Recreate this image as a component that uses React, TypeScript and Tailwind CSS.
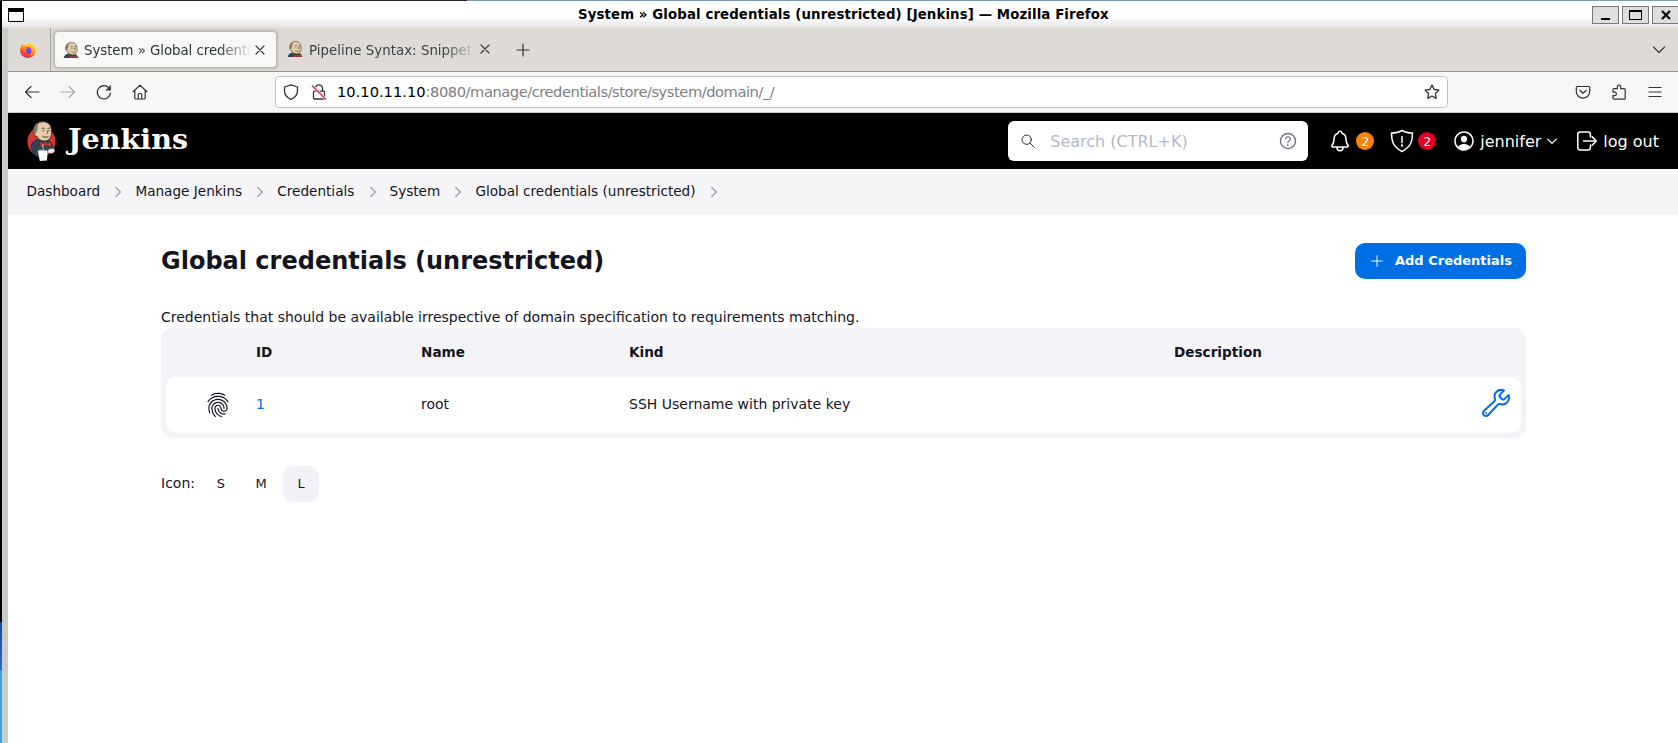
import type { ReactNode } from "react";
import {
  IoBuildOutline,
  IoFingerPrintOutline,
  IoNotificationsOutline,
  IoPersonCircleOutline,
  IoHelpCircleOutline,
} from "react-icons/io5";

function Butler({ className, disc = false }: { className: string; disc?: boolean }) {
  return (
    <svg className={className} viewBox={disc ? "0 0 28 40" : "3.500 0 22 25"} fill="none">
      {disc && <ellipse cx="14" cy="20.500" rx="14" ry="15" fill="#d33833" />}
      <path d="M4.500 22c2-2.500 5-3.500 7.500-3.500l8.500.5c3 1 4.500 3 5 6.500l-1 5-5 1-1 5.500-6 .5-3.500-2.500C5 33 2 26 4.500 22z" fill="#2b4658" stroke="#1b2833" strokeWidth=".6" />
      <path d="M6.800 12.500C5 7 7.500 1.300 14.500.8c5-.4 8.500 2 9.300 6.700.5 3 .4 6.500-.6 8.500-1.400 2.800-3.600 4.300-6.700 4.100-3-.1-6-2-6.800-4.500-1.600-.1-2.900-1.600-2.900-3.100z" fill="#e6cba9" stroke="#2b2520" strokeWidth=".8" />
      <path d="M6.800 12.500C5.200 8 6.700 2.800 12.500 1.200 9.800 4 10 7 9.900 9.300c-.9.500-1.200 1.700-1.300 3.200z" fill="#7d756c" />
      <path d="M14 7.800c1.200-1 2.800-.8 3.400.1M20 7.600c.9-.7 2.200-.6 2.700.1M15.200 9.800h1.500M20.700 9.600h1.300M19.300 9.500c.8 1.200 1.500 2.200.2 3.200M15 15.200c2 1.400 4.500 1.200 6 .2" stroke="#493c32" strokeWidth="1" />
      <path d="m12.500 21 4 1.700 1-1.700 1.500.3.200 1.700 4-2.300.5 5-4.200-1.400-2.700.5-3.800 1.500z" fill="#d33833" stroke="#81201e" strokeWidth=".4" />
      {disc && (
        <>
          <path d="M10.300 29.500h10.200l-1.200 10-7 .5z" fill="#fff" />
          <path d="M20 29.500c2-2 5-3 7-1.200 1 2-.5 4-3 4.200l-3.500-.2z" fill="#ede7df" stroke="#332d28" strokeWidth=".5" />
          <path d="m15 23.500 1 6-4-.5" stroke="#f0f0f0" strokeWidth=".7" />
        </>
      )}
    </svg>
  );
}

function FirefoxMark() {
  return (
    <svg className="mr-px size-4" viewBox="0 0 16 16">
      <defs>
        <linearGradient id="ffOuter" x1=".8" y1="0" x2=".3" y2="1">
          <stop offset="0" stopColor="#fff44f" />
          <stop offset=".4" stopColor="#ffa80e" />
          <stop offset=".75" stopColor="#ff4a3c" />
          <stop offset="1" stopColor="#e31587" />
        </linearGradient>
        <linearGradient id="ffGlobe" x1=".7" y1="0" x2=".3" y2="1">
          <stop offset="0" stopColor="#9059ff" />
          <stop offset="1" stopColor="#4a2fc4" />
        </linearGradient>
      </defs>
      <path d="M10 0c1 2 3 2.300 4.300 4.500C15.600 6 16 8 15.400 10.500 14.500 13.700 11.500 16 8 16c-4.500 0-8-3.400-8-7.700C0 6 .8 4.500 1.800 3.300L2.200 2l1.700 1.500C5 3.200 6 3.300 7 3.800 7.300 2 8.600.8 10 0z" fill="url(#ffOuter)" />
      <circle cx="8" cy="8.400" r="3.400" fill="url(#ffGlobe)" />
      <path d="M3.500 5.500c1.500-.6 3 .1 4.200.6C6.500 6.500 6.400 7.600 5.500 8c.2 1.400 1.500 2 3 1.500-1 1.700-4 1.500-5-1z" fill="#ff8a16" />
    </svg>
  );
}

function Stroke({ children, className, w = 1.2 }: { children: ReactNode; className: string; w?: number }) {
  return (
    <svg className={className} viewBox="0 0 16 16" fill="none" stroke="currentColor" strokeWidth={w} strokeLinecap="round" strokeLinejoin="round">
      {children}
    </svg>
  );
}

function WindowButton({ children }: { children: ReactNode }) {
  return (
    <div className="flex h-[18px] w-[27px] shrink-0 items-center justify-center border border-[#777] bg-[#dedede]">
      {children}
    </div>
  );
}

function CloseX() {
  return (
    <Stroke className="size-4 shrink-0 text-[#3a3d40]">
      <path d="m4 4 8 8M12 4l-8 8" />
    </Stroke>
  );
}

function TitleBar() {
  return (
    <div className="flex h-[27px] shrink-0 items-start bg-linear-to-b from-white from-60% to-[#e2e2e2] pl-[6px]">
      <div className="mt-[7px] h-[14px] w-4 border border-t-4 border-black bg-white" />
      <div className="flex-1 pt-[5px] pl-[554px] text-[13.33px] leading-[18px] font-bold tracking-[0.1px] whitespace-pre text-black">
        System » Global credentials (unrestricted) [Jenkins] — Mozilla Firefox
      </div>
      <div className="-mr-px flex gap-[3px] pt-[5px]">
        <WindowButton>
          <div className="mt-[7px] h-[2px] w-[9px] bg-black" />
        </WindowButton>
        <WindowButton>
          <div className="h-[10px] w-[13px] border border-t-2 border-black" />
        </WindowButton>
        <WindowButton>
          <svg className="size-[10px]" viewBox="0 0 10 10" stroke="#000" strokeWidth="2.300">
            <path d="m1 1 8 8M9 1 1 9" />
          </svg>
        </WindowButton>
      </div>
    </div>
  );
}

function TabStrip() {
  return (
    <div className="flex h-[44px] shrink-0 items-center border-b border-[#96948a] bg-[#dedbd7]">
      <div className="flex h-full w-[43px] items-center justify-center border-r border-[#a8a6a0] pr-px">
        <FirefoxMark />
      </div>
      <div className="ml-[3px] flex h-[37px] w-[223px] items-center rounded-[4px] border border-[#bdbab6] bg-[#f8f8f7] pl-[8px] shadow-[0_0_3px_rgba(0,0,0,0.3)]">
        <Butler className="h-4 w-4" />
        <div className="mt-[2px] ml-[5px] w-[168px] mask-r-from-80% text-[13.33px] tracking-[-0.04px] whitespace-nowrap text-[#2e3436]">
          System » Global credenti
        </div>
        <CloseX />
      </div>
      <div className="flex w-[220px] items-center pl-[10px]">
        <Butler className="h-4 w-4" />
        <div className="mt-[2px] ml-[6px] w-[168px] mask-r-from-80% text-[13.33px] tracking-[0.04px] whitespace-nowrap text-[#3c4143]">
          Pipeline Syntax: Snippet
        </div>
        <CloseX />
      </div>
      <Stroke className="ml-[18px] size-4 text-[#2e3436]">
        <path d="M8 2v12M2 8h12" />
      </Stroke>
      <div className="flex-1" />
      <Stroke className="mr-[11px] size-4 text-[#3a3d40]">
        <path d="m2.500 5 5.500 5.500L13.500 5" />
      </Stroke>
    </div>
  );
}

function Toolbar() {
  return (
    <div className="flex h-[41px] shrink-0 items-center border-b border-[#c9c6bf] bg-[#f7f7f5] text-[#2e3436]">
      <div className="flex gap-5 pl-4">
        <Stroke className="size-4"><path d="M15 8H1.500M7 2.500 1.500 8 7 13.500" /></Stroke>
        <Stroke className="size-4 text-[#a9abac]"><path d="M1 8h13.500M9 2.500 14.500 8 9 13.500" /></Stroke>
        <Stroke className="size-4" w={1.3}>
          <path d="M14.500 9.200A6.600 6.600 0 1 1 12.600 3.600" />
          <path d="M14.700 1.500v4.800H10z" fill="currentColor" strokeWidth=".4" />
        </Stroke>
        <Stroke className="size-4">
          <path d="M1 7.800 8 1.200l7 6.600M2.800 6.500v7.200q0 1.300 1.300 1.300h7.800q1.300 0 1.300-1.300V6.500M6.300 14.800v-4.300q0-1 1-1h1.400q1 0 1 1v4.300" />
        </Stroke>
      </div>
      <div className="ml-[127px] flex h-[32px] w-[1173px] items-center rounded-[4px] border border-[#c3c0bb] bg-white pl-[7px]">
        <Stroke className="size-4" w={1.3}>
          <path d="M8 .8 14.500 3v4c0 4-2.500 6.600-6.500 8.400C4 13.600 1.500 11 1.500 7V3z" />
        </Stroke>
        <svg className="ml-[12px] size-4" viewBox="0 0 16 16" fill="none" stroke="#2e3436" strokeWidth="1.300">
          <path d="M4.500 7V4.300a3.500 3.500 0 0 1 7 0V7M3.500 7.200h9q1 0 1 1V14q0 1-1 1h-9q-1 0-1-1V8.200q0-1 1-1z" />
          <path d="m1 1.500 14 14" stroke="#fff" strokeWidth="2.500" />
          <path d="m1 1.500 14 14" stroke="#e22850" strokeWidth="1.400" />
        </svg>
        <div className="ml-[10px] flex-1 text-[14.67px] whitespace-pre text-[#808080]">
          <span className="text-black">10.10.11.10</span>
          <span className="tracking-[-0.45px]">:8080/manage/credentials/store/system/domain/_/</span>
        </div>
        <Stroke className="mr-[7px] size-4" w={1.3}>
          <path d="m8 1 2.100 4.500 4.900.6-3.600 3.400.9 4.900L8 12l-4.300 2.400.9-4.900L1 6.100l4.900-.6z" />
        </Stroke>
      </div>
      <div className="ml-[127px] flex gap-5">
        <Stroke className="size-4">
          <path d="M2.500 2.500h11q1.200 0 1.200 1.200V7.500a6.700 6.700 0 0 1-13.400 0V3.700q0-1.200 1.200-1.200zM4.700 6.300 8 9.300l3.300-3" />
        </Stroke>
        <Stroke className="size-4">
          <path d="M6.300 4.700V2.900a1.700 1.700 0 0 1 3.400 0v1.800h3.500q1 0 1 1v8.500q0 1-1 1H3q-1 0-1-1v-2.600h1.700a1.700 1.700 0 0 0 0-3.400H2V5.700q0-1 1-1z" />
        </Stroke>
        <Stroke className="size-4"><path d="M2 3.500h12M2 8h12M2 12.500h12" /></Stroke>
      </div>
    </div>
  );
}

function Badge({ children, className }: { children: ReactNode; className: string }) {
  return (
    <span className={`flex size-[18px] items-center justify-center rounded-full pt-px text-xs text-white ${className}`}>
      {children}
    </span>
  );
}

function JenkinsHeader() {
  return (
    <header className="flex h-14 shrink-0 items-center bg-black text-base text-white">
      <Butler className="ml-[19px] h-10 w-[29px]" disc />
      <div className="ml-[12px] -mt-[4px] flex-1 font-['DejaVu_Serif',serif] text-[28.6px] font-bold">Jenkins</div>
      <div className="flex h-10 w-[300px] items-center rounded-md bg-white">
        <Stroke className="ml-[13px] size-[14px] text-[#222]" w={1.1}>
          <circle cx="6.500" cy="6.500" r="5.300" />
          <path d="m10.500 10.500 4.500 4.500" />
        </Stroke>
        <span className="mt-px ml-[15px] flex-1 text-[#b7b7c7]">Search (CTRL+K)</span>
        <IoHelpCircleOutline className="mr-[9px] size-[22px] text-[#73738c]" />
      </div>
      <IoNotificationsOutline className="ml-[20px] size-6" />
      <Badge className="ml-[4px] bg-[#fe820a]">2</Badge>
      <Stroke className="ml-[16px] size-[24px]" w={1}>
        <path d="M8 1C6 2.300 3.500 2.600 1 2.700c0 5 .8 9 7 12.300 6.200-3.300 7-7.300 7-12.300C12.500 2.600 10 2.300 8 1zM8 5v4" />
        <circle cx="8" cy="11" r=".3" />
      </Stroke>
      <Badge className="ml-[4px] bg-[#e6001f]">2</Badge>
      <IoPersonCircleOutline className="ml-[16px] size-6" />
      <span className="mt-px ml-[4px]">jennifer</span>
      <Stroke className="ml-[5px] size-3" w={1.6}><path d="m2 5.500 6 5.500 6-5.500" /></Stroke>
      <Stroke className="ml-[18px] size-[22px]" w={1.1}>
        <path d="M10.500 5V3.200q0-1.700-1.700-1.700H3Q1.300 1.500 1.300 3.200v9.600q0 1.700 1.700 1.700h5.800q1.700 0 1.700-1.700V11M5.500 8h9.300M11.800 5l3 3-3 3" />
      </Stroke>
      <span className="mt-px mr-[19px] ml-[5px]">log out</span>
    </header>
  );
}

const crumbs = ["Dashboard", "Manage Jenkins", "Credentials", "System", "Global credentials (unrestricted)"];

function Breadcrumbs() {
  return (
    <nav className="flex h-[46px] shrink-0 items-center bg-[#f5f5f8] pb-px pl-[18.500px] text-[13.6px] text-[#14141f]">
      {crumbs.map((crumb) => (
        <span key={crumb} className="flex items-center">
          {crumb}
          <Stroke className="mt-[2px] mr-[11px] ml-[12.200px] size-3 text-[#a9a9bd]" w={2.2}>
            <path d="m5 2 6 6-6 6" />
          </Stroke>
        </span>
      ))}
    </nav>
  );
}

const columns = "grid grid-cols-[90px_165px_208px_545px_1fr] items-center";

function Content() {
  return (
    <main className="flex flex-col pr-[152px] pl-[153px] text-sm text-[#14141f]">
      <div className="mt-7 flex h-9 items-center justify-between">
        <h1 className="text-2xl font-bold">Global credentials (unrestricted)</h1>
        <button className="flex h-9 w-[171px] items-center rounded-[10px] bg-[#006fe6] pl-[15px] text-[13px] font-bold text-white">
          <Stroke className="size-[14px]" w={1.1}><path d="M8 2v12M2 8h12" /></Stroke>
          <span className="ml-[11px]">Add Credentials</span>
        </button>
      </div>
      <p className="mt-[27px] h-[22px] leading-[22px]">
        Credentials that should be available irrespective of domain specification to requirements matching.
      </p>
      <section className="h-[110px] rounded-xl bg-[#f3f3f8] px-[5px] pb-[5px]">
        <div className={`${columns} h-[49px] pt-px text-[13.6px] font-bold`}>
          <span />
          <span>ID</span>
          <span>Name</span>
          <span>Kind</span>
          <span>Description</span>
        </div>
        <div className={`${columns} h-14 rounded-[10px] bg-white`}>
          <IoFingerPrintOutline className="-mt-px ml-[39px] size-[26px]" />
          <a className="-mt-[2px] text-[#006fe6]">1</a>
          <span className="-mt-[2px]">root</span>
          <span className="-mt-[2px]">SSH Username with private key</span>
          <IoBuildOutline className="mr-[9px] mb-[5px] size-8 justify-self-end text-[#006fe6]" />
        </div>
      </section>
      <div className="mt-7 flex h-9 items-center">
        <span className="-mt-[2px] w-[42px]">Icon:</span>
        <div className="flex gap-1 text-[13px]">
          <span className="flex size-9 items-center justify-center">S</span>
          <span className="flex size-9 items-center justify-center">M</span>
          <span className="flex size-9 items-center justify-center rounded-[10px] bg-[#f1f1f7]">L</span>
        </div>
      </div>
    </main>
  );
}

export default function App() {
  return (
    <div className="flex h-[743px] w-[1678px] flex-col overflow-hidden bg-white font-['DejaVu_Sans',sans-serif]">
      <div className="flex h-px shrink-0">
        <div className="w-[467px] bg-[#222227]" />
        <div className="flex-1 bg-[#7c9cba]" />
      </div>
      <div className="flex min-h-0 flex-1">
        <div className="flex w-[2px] shrink-0 flex-col">
          <div className="h-[621px] bg-black" />
          <div className="h-[48px] bg-linear-to-b from-[#1b4a9c] to-[#2a66cf]" />
          <div className="flex-1 bg-[#35a3dc]" />
        </div>
        <div className="flex min-w-0 flex-1 flex-col">
          <TitleBar />
          <div className="flex min-h-0 flex-1">
            <div className="w-[6px] shrink-0 bg-[#cbcbcb]" />
            <div className="flex min-w-0 flex-1 flex-col">
              <TabStrip />
              <Toolbar />
              <JenkinsHeader />
              <Breadcrumbs />
              <Content />
            </div>
          </div>
        </div>
      </div>
    </div>
  );
}
